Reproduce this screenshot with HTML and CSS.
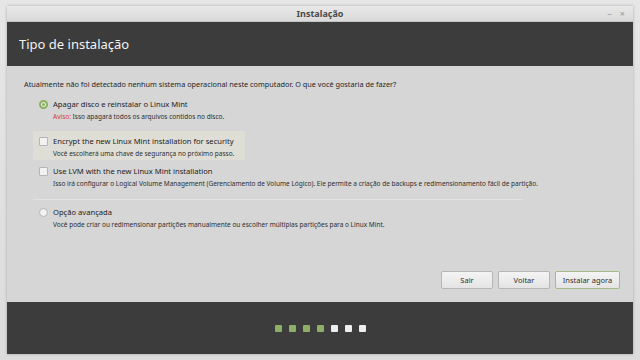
FILE: index.html
```html
<!DOCTYPE html>
<html lang="pt-BR">
<head>
    <meta charset="UTF-8">
    <title>Instalação</title>
    <link rel="stylesheet" href="styles.css">
</head>
<body>
    <div class="window">
        <div class="titlebar">
            <span class="title">Instalação</span>
            <span class="controls"><span class="ctl">–</span><span class="ctl">×</span></span>
        </div>
        <div class="header">
            <h1>Tipo de instalação</h1>
        </div>
        <div class="content">
            <p class="question">Atualmente não foi detectado nenhum sistema operacional neste computador. O que você gostaria de fazer?</p>

            <div class="options">
                <div class="option first">
                    <span class="radio checked"></span>
                    <div class="text">
                        <div class="label">Apagar disco e reinstalar o Linux Mint</div>
                        <div class="desc"><span class="warn">Aviso:</span> Isso apagará todos os arquivos contidos no disco.</div>
                    </div>
                </div>

                <div class="option hover">
                    <span class="check"></span>
                    <div class="text">
                        <div class="label">Encrypt the new Linux Mint installation for security</div>
                        <div class="desc">Você escolherá uma chave de segurança no próximo passo.</div>
                    </div>
                </div>

                <div class="option lvm">
                    <span class="check"></span>
                    <div class="text">
                        <div class="label">Use LVM with the new Linux Mint installation</div>
                        <div class="desc">Isso irá configurar o Logical Volume Management (Gerenciamento de Volume Lógico). Ele permite a criação de backups e redimensionamento fácil de partição.</div>
                    </div>
                </div>

                <div class="separator"></div>

                <div class="option">
                    <span class="radio"></span>
                    <div class="text">
                        <div class="label">Opção avançada</div>
                        <div class="desc">Você pode criar ou redimensionar partições manualmente ou escolher múltiplas partições para o Linux Mint.</div>
                    </div>
                </div>
            </div>

            <div class="buttons">
                <button>Sair</button>
                <button>Voltar</button>
                <button class="default">Instalar agora</button>
            </div>
        </div>
        <div class="footer">
            <span class="dot done"></span>
            <span class="dot done"></span>
            <span class="dot done"></span>
            <span class="dot done"></span>
            <span class="dot"></span>
            <span class="dot"></span>
            <span class="dot"></span>
        </div>
    </div>
</body>
</html>
```

FILE: styles.css
```css
* {
    box-sizing: border-box;
}

body {
    margin: 0;
    width: 640px;
    height: 360px;
    overflow: hidden;
    background: linear-gradient(#e6e6e6, #dcdcdc);
    font-family: 'Noto Sans', 'DejaVu Sans', sans-serif;
    padding: 6px 7px 6px 7px;
}

.window {
    height: 348px;
    display: flex;
    flex-direction: column;
    background: #d6d6d6;
    box-shadow: 0 0 3px rgba(0,0,0,0.25);
}

.titlebar {
    height: 16px;
    flex: none;
    position: relative;
    display: flex;
    align-items: center;
    justify-content: center;
    background: linear-gradient(#e8e8e8, #dadada);
    border-bottom: 1px solid #c4c4c4;
}

.title {
    font-size: 9px;
    font-weight: bold;
    color: #4a4a4a;
}

.controls {
    position: absolute;
    right: 8px;
    top: 1px;
    display: flex;
    gap: 8px;
    font-size: 9px;
    color: #9a9a9a;
}

.header {
    height: 44px;
    flex: none;
    background: #3c3c3c;
    display: flex;
    align-items: center;
    padding-left: 12px;
}

.header h1 {
    margin: 0;
    font-size: 13px;
    font-weight: normal;
    color: #f2f2f2;
}

.content {
    flex: 1;
    padding: 12px 13px 0 17px;
    display: flex;
    flex-direction: column;
}

.question {
    margin: 0;
    font-size: 7.3px;
    color: #262626;
    line-height: 12px;
    white-space: nowrap;
}

.options {
    margin-left: 9px;
    display: flex;
    flex-direction: column;
    width: 490px;
}

.option {
    display: flex;
    align-items: flex-start;
    gap: 5px;
    padding: 0 6px;
    white-space: nowrap;
}

.option.first {
    margin-top: 7.5px;
}

.option.hover {
    background: #dfded6;
    margin-top: 9.5px;
    padding-top: 4px;
    padding-bottom: 1px;
    width: 212px;
}

.option.lvm {
    margin-top: 4.5px;
}

.radio, .check {
    flex: none;
    width: 9px;
    height: 9px;
    margin-top: 2px;
    background: #f2f2f2;
    border: 1px solid #b4b4b4;
}

.radio {
    border-radius: 50%;
}

.radio.checked {
    background: #f4f4f4;
    border: 2px solid #8bb05f;
    box-shadow: inset 0 0 0 1px #f4f4f4, inset 0 0 0 3px #8bb05f;
}

.check {
    border-radius: 1px;
}

.label {
    font-size: 7.6px;
    color: #222;
    line-height: 13px;
}

.desc {
    font-size: 6.5px;
    color: #2e2e2e;
    line-height: 11px;
}

.warn {
    color: #d83a3a;
}

.separator {
    height: 1px;
    background: #e2e2e2;
    margin: 10px 0 6px 0;
}

.buttons {
    margin-top: auto;
    margin-bottom: 13px;
    display: flex;
    justify-content: flex-end;
    gap: 5px;
}

button {
    height: 18px;
    min-width: 52px;
    padding: 0 6px;
    font-family: inherit;
    font-size: 7.5px;
    color: #2e2e2e;
    background: linear-gradient(#f4f4f4, #e4e4e4);
    border: 1px solid #b6b6b6;
    border-radius: 2px;
}

button.default {
    border-color: #a6bb8a;
    min-width: 65px;
}

.footer {
    height: 52px;
    flex: none;
    background: #3c3c3c;
    display: flex;
    align-items: center;
    justify-content: center;
    gap: 7px;
}

.dot {
    width: 7px;
    height: 7px;
    background: #eeeeee;
    border-radius: 1px;
}

.dot.done {
    background: #8daf68;
}
```
